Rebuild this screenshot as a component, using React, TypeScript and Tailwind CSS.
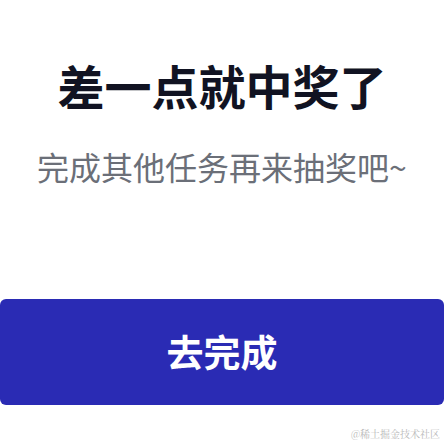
export default function App() {
  return (
    <div
      className="relative flex h-[444px] w-[444px] flex-col items-center bg-white"
      style={{ fontFamily: '"Noto Sans CJK SC", "Noto Sans", sans-serif' }}
    >
      <h1 className="mt-[61px] text-[47px] font-bold leading-[48px] text-[#111322]">差一点就中奖了</h1>
      <p className="mt-[41px] text-[32px] leading-[32px] text-[#6b6f78]">完成其他任务再来抽奖吧~</p>
      <button className="mt-[117px] flex h-[106px] w-full items-center justify-center rounded-[6px] bg-[#2a2bb4] text-[37px] font-bold text-white">
        去完成
      </button>
      <span
        className="absolute bottom-[3px] right-[4px] text-[10px] text-[#b8b8b8]"
        style={{ fontFamily: '"Noto Serif CJK SC", "Noto Sans CJK SC", serif' }}
      >
        @稀土掘金技术社区
      </span>
    </div>
  );
}
